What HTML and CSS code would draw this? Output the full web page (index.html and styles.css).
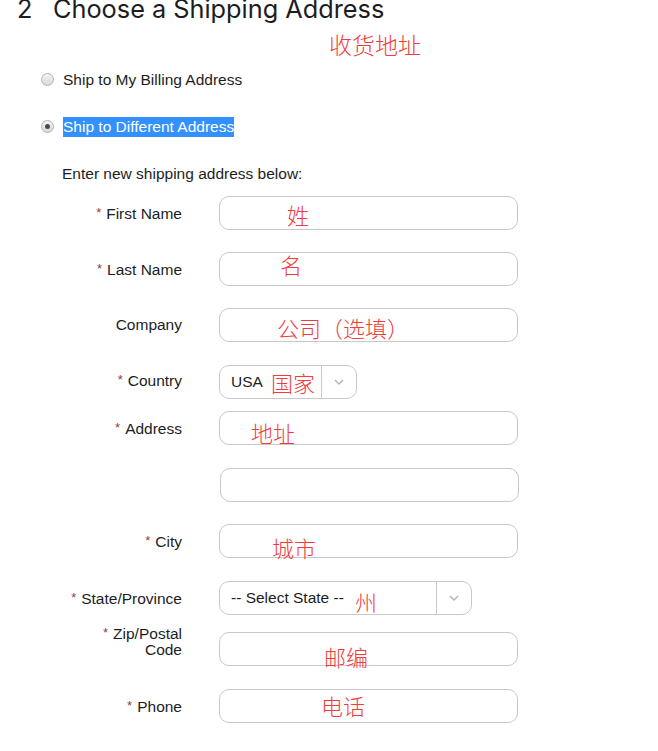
FILE: index.html
```html
<!DOCTYPE html>
<html lang="en">
<head>
<meta charset="utf-8">
<title>Choose a Shipping Address</title>
<link rel="stylesheet" href="styles.css">
</head>
<body>
<div class="page">
  <h2 class="heading"><span class="step">2</span>Choose a Shipping Address</h2>

  <div class="options">
    <div class="option">
      <span class="radio"></span>
      <span class="option-label">Ship to My Billing Address</span>
    </div>
    <div class="option option--second">
      <span class="radio radio--checked"></span>
      <span class="option-label option-label--selected">Ship to Different Address</span>
    </div>
    <p class="hint">Enter new shipping address below:</p>
  </div>

  <div class="form">
    <div class="row row--first">
      <label class="label"><span class="req">*</span>First Name</label>
      <div class="input"></div>
    </div>
    <div class="row">
      <label class="label"><span class="req">*</span>Last Name</label>
      <div class="input"></div>
    </div>
    <div class="row">
      <label class="label">Company</label>
      <div class="input"></div>
    </div>
    <div class="row row--loose">
      <label class="label label--up"><span class="req">*</span>Country</label>
      <div class="select select--country">
        <span class="select-value">USA</span>
        <span class="select-arrow"><svg width="10" height="6" viewBox="0 0 10 6"><polyline points="1,1 5,5 9,1" fill="none" stroke="#b3b3b3" stroke-width="1.4"/></svg></span>
      </div>
    </div>
    <div class="row row--tight">
      <label class="label"><span class="req">*</span>Address</label>
      <div class="input"></div>
    </div>
    <div class="row row--loose">
      <span class="label"></span>
      <div class="input input--shift"></div>
    </div>
    <div class="row">
      <label class="label"><span class="req">*</span>City</label>
      <div class="input"></div>
    </div>
    <div class="row row--loose">
      <label class="label"><span class="req">*</span>State/Province</label>
      <div class="select select--state">
        <span class="select-value">-- Select State --</span>
        <span class="select-arrow"><svg width="10" height="6" viewBox="0 0 10 6"><polyline points="1,1 5,5 9,1" fill="none" stroke="#b3b3b3" stroke-width="1.4"/></svg></span>
      </div>
    </div>
    <div class="row row--mid">
      <label class="label label--two"><span class="req">*</span>Zip/Postal<br>Code</label>
      <div class="input"></div>
    </div>
    <div class="row row--loose">
      <label class="label"><span class="req">*</span>Phone</label>
      <div class="input"></div>
    </div>
  </div>

  <span class="note note--title">收货地址</span>
  <span class="note note--first">姓</span>
  <span class="note note--last">名</span>
  <span class="note note--company">公司（选填）</span>
  <span class="note note--country">国家</span>
  <span class="note note--address">地址</span>
  <span class="note note--city">城市</span>
  <span class="note note--state">州</span>
  <span class="note note--zip">邮编</span>
  <span class="note note--phone">电话</span>
</div>
</body>
</html>
```
FILE: styles.css
```css
html, body {
  margin: 0;
  padding: 0;
  background: #ffffff;
}

body {
  font-family: "Liberation Sans", Arial, sans-serif;
  color: #1d1d1f;
}

.page {
  position: relative;
  width: 658px;
  height: 751px;
  overflow: hidden;
}

.heading {
  margin: 0;
  padding-left: 17px;
  font-family: Inter, "Liberation Sans", sans-serif;
  font-weight: 400;
  font-size: 25.3px;
  line-height: 18px;
  color: #1d1d1f;
  display: flex;
}

.step {
  width: 36px;
}

.options {
  padding-left: 41px;
  margin-top: 52px;
}

.option {
  display: flex;
  align-items: center;
  height: 20px;
}

.option--second {
  margin-top: 27px;
}

.radio {
  width: 11px;
  height: 11px;
  border-radius: 50%;
  border: 1px solid #b4b4b4;
  background: linear-gradient(#f3f3f3, #d9d9d9);
  margin-right: 9px;
  display: flex;
  align-items: center;
  justify-content: center;
  box-sizing: content-box;
  position: relative;
  top: -1px;
}

.radio--checked::after {
  content: "";
  width: 5px;
  height: 5px;
  border-radius: 50%;
  background: #4a4a4a;
}

.option-label {
  font-size: 15.5px;
  line-height: 20px;
}

.option-label--selected {
  background: #3390ff;
  color: #ffffff;
}

.hint {
  margin: 27px 0 0 21px;
  font-size: 15.5px;
  line-height: 20px;
}

.form {
  display: flex;
  flex-direction: column;
  margin-top: 12px;
}

.row {
  display: flex;
  align-items: center;
  margin-top: 22px;
}

.row--first {
  margin-top: 0;
}

.row--loose {
  margin-top: 23px;
}

.row--tight {
  margin-top: 12px;
}

.row--mid {
  margin-top: 17px;
}

.label {
  width: 182px;
  flex: none;
  text-align: right;
  font-size: 15.5px;
  line-height: 16px;
  margin-right: 37px;
  color: #1d1d1f;
}

.label--up {
  margin-top: -4px;
}

.label--two {
  line-height: 16px;
  margin-top: -16px;
}

.req {
  color: #9a3a3a;
  font-size: 13px;
  vertical-align: 2px;
  margin-right: 5px;
}

.input {
  width: 299px;
  height: 34px;
  box-sizing: border-box;
  border: 1px solid #c8c8c8;
  border-radius: 10px;
  background: #ffffff;
}

.input--shift {
  margin-left: 1px;
}

.select {
  height: 34px;
  box-sizing: border-box;
  border: 1px solid #c8c8c8;
  border-radius: 10px;
  display: flex;
  align-items: stretch;
  background: #ffffff;
}

.select--country {
  width: 138px;
}

.select--state {
  width: 253px;
}

.select-value {
  flex: 1;
  display: flex;
  align-items: center;
  padding-left: 11px;
  font-size: 15.5px;
  color: #1d1d1f;
}

.select-arrow {
  width: 34px;
  border-left: 1px solid #c8c8c8;
  display: flex;
  align-items: center;
  justify-content: center;
}

.note {
  position: absolute;
  font-family: "Noto Sans CJK SC", sans-serif;
  font-weight: 300;
  font-size: 22px;
  line-height: 22px;
  color: #f23c3c;
  white-space: nowrap;
}

.note--title { left: 329px; top: 33px; font-size: 23px; line-height: 23px; }
.note--first { left: 287px; top: 203px; }
.note--last { left: 280px; top: 253px; }
.note--company { left: 277px; top: 316px; }
.note--country { left: 271px; top: 371px; }
.note--address { left: 251px; top: 421px; }
.note--city { left: 272px; top: 536px; }
.note--state { left: 355px; top: 590px; }
.note--zip { left: 324px; top: 645px; }
.note--phone { left: 321px; top: 694px; }
```
